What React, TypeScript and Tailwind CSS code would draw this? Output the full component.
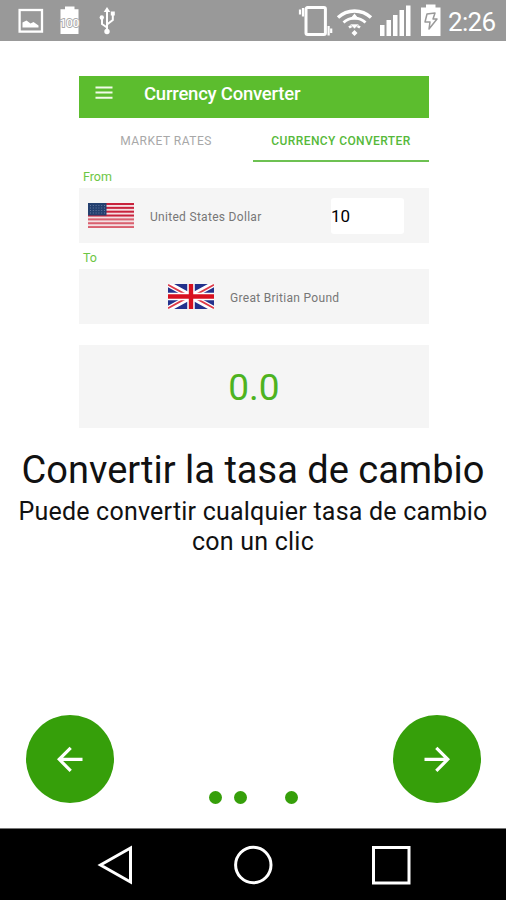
import React from "react";

const styles = {
  label: "h-[26px] pl-1 pt-px text-[12.5px] leading-[27px] text-[#6cc644]",
  row: "bg-[#f5f5f5] flex items-center",
  country:
    "pt-[2px] text-[12px] leading-none tracking-[0.3px] text-[#777] whitespace-nowrap",
  round:
    "w-[88px] h-[88px] rounded-full bg-[#369f0a] flex items-center justify-center",
  dot: "w-[13px] h-[13px] rounded-full bg-[#369f0a]",
};

const StatusBar = () => {
  return (
    <div className="h-[41px] shrink-0 bg-[#999999] flex text-white">
      <svg width="130" height="40" viewBox="0 0 130 40" fill="none">
        {/* picture */}
        <rect x="19.6" y="10" width="22.4" height="21.6" stroke="#fff" strokeWidth="2.3" />
        <path d="M22.5 27.500v-5l4-2 4 3 3-1.5 5 3.500v2z" fill="#fff" />
        {/* battery level */}
        <path d="M65 6.5h9.5v2.8h4V34h-18V9.3H65z" fill="#fff" />
        <text
          x="69.5"
          y="26.5"
          textAnchor="middle"
          fontFamily="Roboto, sans-serif"
          fontSize="11.5"
          fontWeight="500"
          fill="#fff"
          stroke="#aaa"
          strokeWidth="1.8"
          paintOrder="stroke"
        >
          100
        </text>
        {/* usb */}
        <g stroke="#fff" strokeWidth="2">
          <path d="M107 31V11M107 27.5l-5-3.5v-6M107 24.5l5.8-4.5v-6" />
          <circle cx="107" cy="31.5" r="2.7" fill="#fff" stroke="none" />
          <circle cx="101.8" cy="17.5" r="2.2" fill="#fff" stroke="none" />
          <path d="M107 7l3.300 5h-6.600z" fill="#fff" stroke="none" />
          <path d="M110.800 11.500h4v4h-4z" fill="#fff" stroke="none" />
        </g>
      </svg>
      <svg className="ml-auto" width="152" height="40" viewBox="294 0 152 40" fill="none">
        {/* vibrate */}
        <rect x="306" y="7.6" width="19.4" height="27" rx="1.5" stroke="#fff" strokeWidth="3" />
        <path d="M303 8v8.5M300 9.500v5M328.600 26v9.500M331.200 28.500v4.500" stroke="#fff" strokeWidth="2.2" />
        {/* wifi */}
        <path d="M338 17.5a24 24 0 0 1 33 0" stroke="#fff" strokeWidth="3.4" />
        <path d="M343.5 22.5a16 16 0 0 1 22 0" stroke="#fff" strokeWidth="2.8" />
        <path d="M349 27.500a8.5 8.5 0 0 1 11 0" stroke="#fff" strokeWidth="2.4" />
        <path d="M354.5 13.500l4.800 6h-9.600zM354.5 30l3 3-3 3-3-3z" fill="#fff" />
        <path d="M349.800 24h9.400l-4.700 5z" fill="#fff" stroke="#999" strokeWidth=".6" />
        {/* signal */}
        <path
          d="M380 25h4.500v11H380zM386.500 20h4.500v16h-4.500zM393 15h4.500v21H393zM399.500 10h4.500v26h-4.500zM406 5.5h4.500V36H406z"
          fill="#fff"
        />
        {/* battery */}
        <path d="M426 4.5h9.5v3h5V36h-19.5V7.500h5z" fill="#fff" />
        <path
          d="M427 14l8-1-2 6h4l-8 10 1-7h-5z"
          stroke="#999"
          strokeWidth="1.5"
          strokeLinejoin="round"
        />
      </svg>
      <span className="w-[60px] pl-[2px] text-[26px] leading-[44px] tracking-[-0.7px]">
        2:26
      </span>
    </div>
  );
};

const UsFlag = () => {
  return (
    <svg width="46" height="25" viewBox="0 0 46 25">
      <rect width="46" height="25" fill="#f4dfe2" />
      {[0, 1, 2, 3, 4, 5, 6].map((i) => (
        <rect
          key={i}
          y={i * 3.846}
          width="46"
          height="2"
          fill={i < 4 ? "#c8223c" : "#d9606f"}
        />
      ))}
      <rect width="18.5" height="12.5" fill="#24406f" />
      {[2, 4.5, 7, 9.5].map((y) => (
        <path
          key={y}
          d={`M2 ${y + 0.5}h15`}
          stroke="#6d80a6"
          strokeWidth=".9"
          strokeDasharray="1 1.8"
        />
      ))}
    </svg>
  );
};

const UkFlag = () => {
  return (
    <svg width="46" height="25" viewBox="0 0 46 25">
      <rect width="46" height="25" fill="#23318c" />
      <path d="M0 0l46 25M46 0L0 25" stroke="#fff" strokeWidth="5.8" />
      <path
        d="M0 .8l18 9.8M46 24.2L28 14.4M46 .8L28 10.6M0 24.2l18-9.8"
        stroke="#dd3a48"
        strokeWidth="1.8"
      />
      <path d="M23 0v25M0 12.5h46" stroke="#fff" strokeWidth="7.5" />
      <path d="M23 0v25M0 12.5h46" stroke="#d8101f" strokeWidth="4.4" />
    </svg>
  );
};

const ConverterPreview = () => {
  return (
    <div className="w-[350px] ml-[79px] mt-[35px]">
      <div className="h-[42px] bg-[#5cbd2e] flex items-start text-white">
        <svg className="ml-4 mt-[10px]" width="18" height="14" viewBox="0 0 18 14">
          <path d="M.5 1.500h17M.5 6.600h17M.5 11.800h17" stroke="#f1fbe9" strokeWidth="2" />
        </svg>
        <h2 className="ml-[31px] mt-[6px] text-[18.5px] leading-[25px] font-medium tracking-[-0.22px] whitespace-nowrap">
          Currency Converter
        </h2>
      </div>
      <div className="h-11 flex text-[12px] leading-[46px] text-center whitespace-nowrap">
        <div className="w-[174px] tracking-[0.5px] text-[#a8a8a8]">MARKET RATES</div>
        <div className="w-[176px] tracking-[0.4px] text-[#56b93a] font-medium border-b-2 border-[#6dc152]">
          CURRENCY CONVERTER
        </div>
      </div>
      <div className={styles.label}>From</div>
      <div className={`${styles.row} h-[55px]`}>
        <div className="ml-[9px]">
          <UsFlag />
        </div>
        <span className={`${styles.country} w-[197px] pl-4`}>United States Dollar</span>
        <div className="w-[73px] h-9 rounded-[3px] bg-white text-[17px] leading-[37px] text-black">
          10
        </div>
      </div>
      <div className={styles.label}>To</div>
      <div className={`${styles.row} h-[55px]`}>
        <div className="ml-[89px]">
          <UkFlag />
        </div>
        <span className={`${styles.country} pl-4`}>Great Britian Pound</span>
      </div>
      <div className={`${styles.row} mt-[21px] h-[83px] justify-center text-[#4db31f] text-[37px]`}>
        <span className="pt-[3px]">0.0</span>
      </div>
    </div>
  );
};

const Arrow = ({ flip = false }: { flip?: boolean }) => {
  return (
    <svg
      className={flip ? "-scale-x-100" : ""}
      width="26"
      height="26"
      viewBox="0 0 26 26"
      fill="none"
      stroke="#fff"
      strokeWidth="3.2"
    >
      <path d="M.5 13.300H24M12.300 1.800l11.500 11.500-11.500 11.500" />
    </svg>
  );
};

const NavBar = () => {
  return (
    <div className="h-[72px] shrink-0 bg-black border-t border-[#777]">
      <svg width="506" height="71" viewBox="0 829 506 71" fill="none" stroke="#fff" strokeWidth="3">
        <path d="M130.500 848v34l-30-17z" />
        <circle cx="253.300" cy="865" r="17.700" />
        <rect x="373.500" y="847.500" width="35.500" height="35.500" />
      </svg>
    </div>
  );
};

const App = () => {
  return (
    <div className="w-[506px] h-[900px] bg-white flex flex-col overflow-hidden font-['Roboto',sans-serif]">
      <StatusBar />
      <ConverterPreview />
      <div className="mt-5 text-center text-[#111]">
        <h1 className="text-[38px] leading-[44px] whitespace-nowrap">
          Convertir la tasa de cambio
        </h1>
        <p className="mt-[5px] text-[25px] leading-[30px] tracking-[0.22px] whitespace-nowrap">
          Puede convertir cualquier tasa de cambio
          <br />
          con un clic
        </p>
      </div>
      <div className="mt-auto mb-[25px] pl-[26px] pr-[25px] flex items-end justify-between">
        <button className={styles.round}>
          <Arrow flip />
        </button>
        <div className="flex mb-[-1px]">
          <span className={styles.dot} />
          <span className={`${styles.dot} ml-3`} />
          <span className={`${styles.dot} ml-[38px]`} />
        </div>
        <button className={styles.round}>
          <Arrow />
        </button>
      </div>
      <NavBar />
    </div>
  );
};

export default App;
